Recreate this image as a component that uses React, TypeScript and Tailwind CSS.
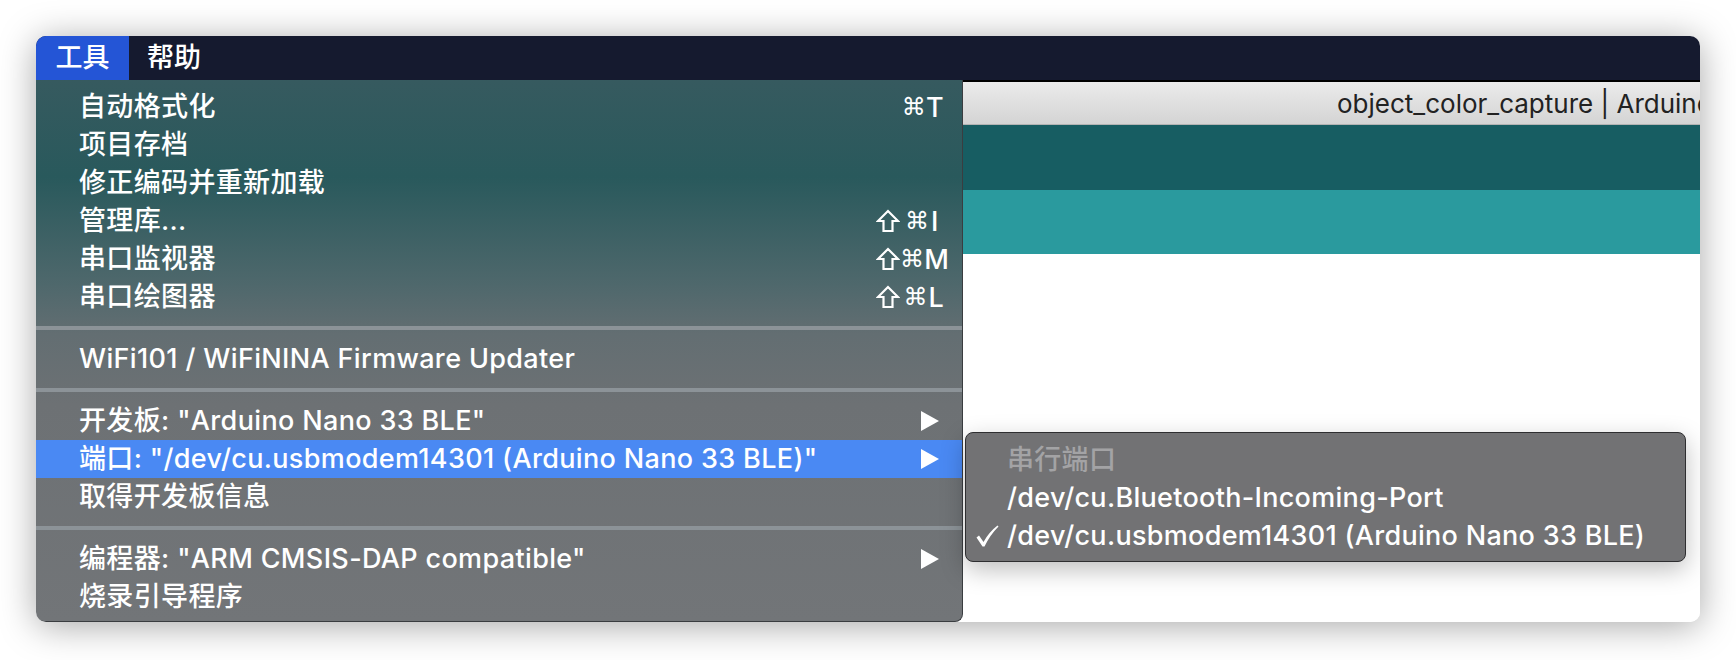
import { type ReactNode } from "react";

interface MenuRow {
  label: string;
  shortcut?: { shift?: boolean; key: string };
  submenu?: boolean;
  active?: boolean;
}

type MenuEntry = MenuRow | "sep";

const toolsMenu: MenuEntry[] = [
  { label: "自动格式化", shortcut: { key: "T" } },
  { label: "项目存档" },
  { label: "修正编码并重新加载" },
  { label: "管理库...", shortcut: { shift: true, key: "I" } },
  { label: "串口监视器", shortcut: { shift: true, key: "M" } },
  { label: "串口绘图器", shortcut: { shift: true, key: "L" } },
  "sep",
  { label: "WiFi101 / WiFiNINA Firmware Updater" },
  "sep",
  { label: '开发板: "Arduino Nano 33 BLE"', submenu: true },
  { label: '端口: "/dev/cu.usbmodem14301 (Arduino Nano 33 BLE)"', submenu: true, active: true },
  { label: "取得开发板信息" },
  "sep",
  { label: '编程器: "ARM CMSIS-DAP compatible"', submenu: true },
  { label: "烧录引导程序" },
];

const font = "font-['Inter','Noto_Sans_CJK_SC',sans-serif]";

function Shortcut({ shift, keyName }: { shift?: boolean; keyName: string }) {
  return (
    <div className="flex items-center w-[68px] mr-[-5px]">
      <span className="w-[29px] flex justify-start">
        {shift && (
          <svg width="24" height="24" viewBox="0 0 24 24" fill="none" stroke="white" strokeWidth="2.2">
            <path d="M12 2 L2 12 H7.5 V22 H16.5 V12 H22 Z" strokeLinejoin="miter" />
          </svg>
        )}
      </span>
      <span className="w-[26px] text-[24px] leading-none font-['DejaVu_Sans',sans-serif]">⌘</span>
      <span className="text-[27px] leading-none">{keyName}</span>
    </div>
  );
}

function Row({ row }: { row: MenuRow }) {
  return (
    <div
      className={`h-[38px] flex items-center pl-[43px] pr-[23px] text-white text-[27px] font-medium tracking-[0.35px] ${row.active ? "bg-[#4a89f3]" : ""}`}
    >
      <span className="flex-1 whitespace-nowrap">{row.label}</span>
      {row.shortcut && <Shortcut shift={row.shortcut.shift} keyName={row.shortcut.key} />}
      {row.submenu && (
        <svg width="18" height="20" viewBox="0 0 18 20">
          <path d="M0 0 L18 10 L0 20 Z" fill="white" />
        </svg>
      )}
    </div>
  );
}

function Separator() {
  return (
    <div className="h-[24px] flex items-center">
      <div className="h-[4px] w-full bg-[#8c9398]" />
    </div>
  );
}

function SubItem({ children, muted, checked }: { children: ReactNode; muted?: boolean; checked?: boolean }) {
  return (
    <div className={`h-[38px] flex items-center text-[27px] font-medium tracking-[0.3px] ${muted ? "text-[#a3a3a5]" : "text-white"}`}>
      <span className="w-[41px] pl-[9px] flex items-center">
        {checked && (
          <svg width="24" height="22" viewBox="0 0 24 22">
            <path d="M1.5 12.5 L4 10.5 L8.5 17 Q14 7 22.5 0.5 L23.5 1.5 Q15 10 9.5 21.5 L7.5 21.5 Z" fill="white" />
          </svg>
        )}
      </span>
      <span className="whitespace-nowrap">{children}</span>
    </div>
  );
}

export default function App() {
  return (
    <div className={`w-[1736px] h-[660px] bg-white pt-[36px] pl-[36px] ${font}`}>
      <div className="w-[1664px] h-[586px] rounded-[10px] bg-white shadow-[0_4px_36px_rgba(0,0,0,0.35)] flex flex-col overflow-hidden">
        {/* system menu bar */}
        <div className="h-[44px] bg-[#151a2f] flex items-stretch text-white text-[27px] font-medium">
          <div className="w-[93px] bg-[#2455d6] flex items-center justify-center">工具</div>
          <div className="px-[18px] flex items-center">帮助</div>
        </div>

        <div className="relative flex-1 flex flex-col">
          {/* IDE window behind the menu */}
          <div className="h-[45px] border-t-2 border-black bg-gradient-to-b from-[#ebebeb] to-[#d4d4d4] border-b border-b-[#b3b3b3] flex items-center pl-[1301px] overflow-hidden">
            <span className="text-[26px] text-[#222] whitespace-nowrap">
              object_color_capture | Arduino 1.8.13
            </span>
          </div>
          <div className="h-[65px] bg-[#175d62]" />
          <div className="h-[64px] bg-[#2a9a9e]" />
          <div className="flex-1 bg-white" />

          {/* tools dropdown */}
          <div className="absolute left-0 top-0 w-[927px] h-[542px] rounded-b-[8px] border-r border-b border-[#3a3d40] pt-[8px] bg-[linear-gradient(to_bottom,#365a5f_0%,#29595c_18%,#4f686c_38%,#636e72_47%,#6d7174_60%,#727578_100%)]">
            {toolsMenu.map((entry, i) =>
              entry === "sep" ? <Separator key={i} /> : <Row key={i} row={entry} />
            )}
          </div>

          {/* port submenu */}
          <div className="absolute left-[929px] top-[352px] w-[721px] h-[130px] rounded-[8px] border border-[#2e2e30] bg-[#727274] pt-[8px] shadow-[0_8px_24px_rgba(0,0,0,0.25)]">
            <SubItem muted>串行端口</SubItem>
            <SubItem>/dev/cu.Bluetooth-Incoming-Port</SubItem>
            <SubItem checked>/dev/cu.usbmodem14301 (Arduino Nano 33 BLE)</SubItem>
          </div>
        </div>
      </div>
    </div>
  );
}
